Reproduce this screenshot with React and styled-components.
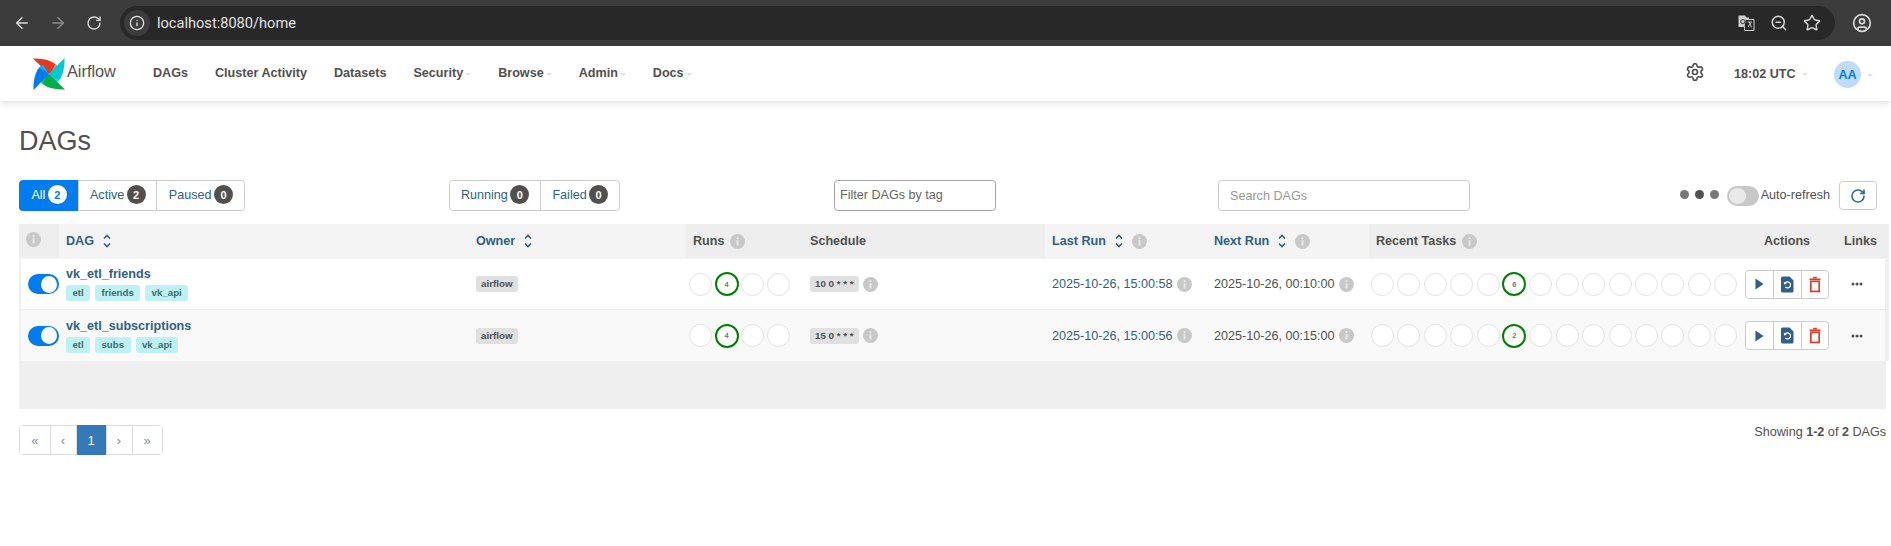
import React from 'react';
import styled, { createGlobalStyle } from 'styled-components';
import { ArrowLeft, ArrowRight, RotateCw, Info, ZoomOut, Star, CircleUser, Settings } from 'lucide-react';

const GlobalStyle = createGlobalStyle`
  html, body {
    margin: 0;
    padding: 0;
    background: #fff;
    font-family: "Liberation Sans", Arial, sans-serif;
    font-size: 12.6px;
    color: #51504f;
  }
  * {
    box-sizing: border-box;
  }
`;

const LINK = '#2f5f8a';

const BrowserBar = styled.div`
  height: 46px;
  background: #3c3c3c;
  display: flex;
  align-items: center;
  padding: 0 16px 0 4px;
`;

const BrowserButton = styled.div`
  width: 36px;
  height: 36px;
  flex: none;
  display: flex;
  align-items: center;
  justify-content: center;
  color: ${(p) => (p.$dim ? '#8a8a8a' : '#d8d8d8')};
`;

const UrlPill = styled.div`
  flex: 1;
  height: 34px;
  margin-left: 8px;
  background: #282828;
  border-radius: 17px;
  display: flex;
  align-items: center;
  padding: 0 14px 0 4px;
  color: #dcdcdc;
`;

const InfoChip = styled.div`
  width: 26px;
  height: 26px;
  border-radius: 50%;
  background: #3c3c3c;
  display: flex;
  align-items: center;
  justify-content: center;
  margin-right: 7px;
`;

const UrlText = styled.span`
  flex: 1;
  font-family: Roboto, "Liberation Sans", sans-serif;
  font-size: 14.6px;
  color: #e3e3e3;
`;

const UrlIcons = styled.div`
  display: flex;
  align-items: center;
  gap: 15px;
`;

const ProfileButton = styled.div`
  width: 26px;
  margin-left: 14px;
  display: flex;
  justify-content: center;
  color: #d8d8d8;
`;

const Navbar = styled.nav`
  height: 55px;
  background: #fff;
  display: flex;
  align-items: center;
  padding: 0 0 0 33px;
  box-shadow: 0 2px 7px rgba(0, 0, 0, 0.13);
  position: relative;
`;

const Brand = styled.div`
  display: flex;
  align-items: center;
  gap: 2px;
  width: 106.5px;
  font-size: 16.3px;
  color: #51504f;
  & > span {
    margin-top: -4px;
  }
`;

const NavItem = styled.a`
  display: flex;
  align-items: center;
  padding: 0 13.5px;
  font-weight: 700;
  font-size: 12.6px;
  color: #51504f;
  margin-top: -1px;
`;

const Caret = styled.span`
  width: 0;
  height: 0;
  margin-left: 2px;
  margin-top: 2px;
  border-left: 3px solid transparent;
  border-right: 3px solid transparent;
  border-top: 3px solid #e6dcea;
`;

const NavRight = styled.div`
  margin-left: auto;
  display: flex;
  align-items: center;
  padding-right: 18px;
`;

const GearIcon = styled(Settings)`
  margin-top: -3px;
`;

const Clock = styled.div`
  display: flex;
  align-items: center;
  font-weight: 700;
  margin: 0 0 0 29px;
  width: 100px;
`;

const Avatar = styled.div`
  width: 27px;
  height: 27px;
  border-radius: 50%;
  background: #bfdcf9;
  color: #017cee;
  font-weight: 700;
  display: flex;
  align-items: center;
  justify-content: center;
  margin-top: 2px;
`;

const Main = styled.main`
  padding: 25px 5px 0 19px;
`;

const Title = styled.h1`
  margin: 0 0 24px;
  font-size: 27px;
  line-height: 30px;
  font-weight: 400;
  color: #51504f;
`;

const Toolbar = styled.div`
  display: grid;
  grid-template-columns: 429.5px 385.5px 384px 252px 1fr;
  align-items: center;
  height: 31px;
  margin-bottom: 13px;
  padding-right: 9px;
`;

const ButtonGroup = styled.div`
  display: flex;
  height: 31px;
`;

const GroupButton = styled.a`
  display: flex;
  align-items: center;
  gap: 2.4px;
  padding: 0 10.8px 2px 11.4px;
  border: 1px solid #ccc;
  margin-left: -1px;
  background: ${(p) => (p.$active ? '#017cee' : '#fff')};
  border-color: ${(p) => (p.$active ? '#017cee' : '#ccc')};
  color: ${(p) => (p.$active ? '#fff' : LINK)};
  &:first-child {
    margin-left: 0;
    border-radius: 3.6px 0 0 3.6px;
  }
  &:last-child {
    border-radius: 0 3.6px 3.6px 0;
  }
`;

const Count = styled.span`
  min-width: 19px;
  height: 19px;
  border-radius: 10px;
  font-size: 11px;
  font-weight: 700;
  display: flex;
  align-items: center;
  justify-content: center;
  background: ${(p) => (p.$inverse ? '#fff' : '#51504f')};
  color: ${(p) => (p.$inverse ? '#017cee' : '#fff')};
`;

const TextInput = styled.input`
  height: 31px;
  width: ${(p) => p.$width}px;
  border: 1px solid ${(p) => (p.$strong ? '#a3a3a3' : '#ccc')};
  border-radius: 3.6px;
  padding: 0 0 ${(p) => (p.$strong ? 2 : 0)}px ${(p) => (p.$strong ? 5 : 11)}px;
  font-family: inherit;
  font-size: 12.6px;
  outline: none;
  &::placeholder {
    color: ${(p) => (p.$strong ? '#666' : '#999')};
    opacity: 1;
  }
`;

const RefreshArea = styled.div`
  display: flex;
  align-items: center;
  justify-content: flex-end;
`;

const Dot = styled.span`
  width: 9px;
  height: 9px;
  margin: -3px 3px 0 3px;
  border-radius: 50%;
  background: ${(p) => (p.$dark ? '#51504f' : '#777')};
`;

const AutoSwitch = styled.span`
  width: 32px;
  height: 20px;
  margin-left: 5px;
  border-radius: 10px;
  background: #c8c8c8;
  padding: 2px;
  display: flex;
`;

const AutoKnob = styled.span`
  width: 17px;
  height: 16px;
  border-radius: 50%;
  background: #e9e9e9;
`;

const AutoLabel = styled.span`
  margin: -1px 9px 0 2px;
`;

const RefreshButton = styled.a`
  width: 38px;
  height: 29px;
  border: 1px solid #ccc;
  border-radius: 3.6px;
  display: flex;
  align-items: center;
  justify-content: center;
  color: #2f6a9e;
`;

const TableWrap = styled.div`
  height: 185px;
  background: #efefef;
`;

const Table = styled.table`
  width: 1870px;
  table-layout: fixed;
  border-collapse: separate;
  border-spacing: 0;
`;

const Th = styled.th`
  height: 35px;
  padding: 0 0 0 ${(p) => p.$pad ?? 7}px;
  text-align: ${(p) => p.$align || 'left'};
  font-weight: 700;
  font-size: 12.6px;
  background: ${(p) => (p.$sortable ? '#f4f4f4' : '#eeeeee')};
  color: ${(p) => (p.$sortable ? LINK : '#51504f')};
  border-bottom: 1px solid #f4f4f4;
  white-space: nowrap;
`;

const HeadInner = styled.span`
  display: inline-flex;
  align-items: center;
  gap: ${(p) => p.$gap || 6}px;
`;

const Tr = styled.tr`
  background: ${(p) => (p.$odd ? '#f9f9f9' : '#fff')};
`;

const Td = styled.td`
  height: 51px;
  padding: 0 0 0 ${(p) => p.$pad ?? 7}px;
  border-bottom: ${(p) => (p.$last ? 'none' : '1px solid #eaeaea')};
  vertical-align: middle;
  text-align: ${(p) => p.$align || 'left'};
  &:first-child {
    border-left: 2px solid #efefef;
  }
  &:last-child {
    border-right: 4px solid #efefef;
  }
`;

const Switch = styled.span`
  width: 31px;
  height: 20px;
  margin-left: 7px;
  border-radius: 10px;
  background: #017cee;
  display: flex;
  align-items: center;
  justify-content: flex-end;
  padding-right: 2px;
`;

const SwitchKnob = styled.span`
  width: 16px;
  height: 17px;
  border-radius: 50%;
  background: #fff;
`;

const DagName = styled.a`
  display: block;
  font-weight: 700;
  line-height: 15px;
  color: ${LINK};
  margin-bottom: 3px;
`;

const Tags = styled.div`
  display: flex;
  gap: 5px;
`;

const Tag = styled.span`
  height: 16px;
  line-height: 16px;
  padding: 0 6.4px;
  border-radius: 3px;
  background: #bdf1f4;
  color: #3f6e6f;
  font-size: 9.7px;
  font-weight: 700;
`;

const Badge = styled.span`
  display: inline-block;
  height: 16px;
  line-height: 16px;
  padding: 0 5px;
  border-radius: 3px;
  background: #e0e0e0;
  color: #51504f;
  font-size: 9.8px;
  font-weight: 700;
  white-space: nowrap;
`;

const Circles = styled.div`
  display: flex;
  align-items: center;
  gap: ${(p) => p.$gap}px;
`;

const Circle = styled.span`
  width: 23px;
  height: 23px;
  flex: none;
  border-radius: 50%;
  background: #fff;
  border: ${(p) => (p.$on ? '2px solid #008000' : '1px solid #e2e2e2')};
  font-size: 7.5px;
  font-weight: 700;
  color: #777;
  display: flex;
  align-items: center;
  justify-content: center;
  ${(p) => (p.$on ? 'width: 24px; height: 24px; margin: 0 -0.5px;' : '')}
`;

const InlineInfo = styled.span`
  display: inline-flex;
  align-items: center;
  gap: ${(p) => p.$gap || 5}px;
  color: ${(p) => p.$color || 'inherit'};
`;

const ActionGroup = styled.div`
  display: inline-flex;
  height: 29px;
  border: 1px solid #ccc;
  border-radius: 3.6px;
  background: #fff;
  vertical-align: middle;
`;

const ActionButton = styled.span`
  width: 27.4px;
  display: flex;
  align-items: center;
  justify-content: center;
  & + & {
    border-left: 1px solid #ccc;
  }
`;

const LinksCell = styled.div`
  padding-left: 22px;
`;

const Footer = styled.div`
  display: flex;
  justify-content: space-between;
  align-items: flex-start;
  margin-top: 16px;
`;

const Pager = styled.div`
  display: flex;
  height: 30px;
  border: 1px solid #ddd;
  border-radius: 3.6px;
`;

const PageCell = styled.a`
  width: ${(p) => p.$width}px;
  display: flex;
  align-items: center;
  justify-content: center;
  color: ${(p) => (p.$active ? '#fff' : '#7d8d9d')};
  background: ${(p) => (p.$active ? '#337ab7' : '#fff')};
  font-size: 13px;
  margin: ${(p) => (p.$active ? '-1px 0' : '0')};
  & + & {
    border-left: 1px solid #ddd;
  }
`;

const Summary = styled.div`
  margin-top: -2px;
  line-height: 18px;
  font-size: 12.6px;
`;

const Logo = () => {
  const blades = [
    { angle: 0, dark: '#e43921', light: '#f4806a' },
    { angle: 90, dark: '#00c7d4', light: '#11e1ee' },
    { angle: 180, dark: '#00ad46', light: '#04d659' },
    { angle: 270, dark: '#017cee', light: '#0cb6ff' },
  ];
  return (
    <svg width="32" height="32" viewBox="0 0 32 32">
      {blades.map((b) => (
        <g key={b.angle} transform={`rotate(${b.angle} 16 16)`}>
          <path d="M0 0.5 L16 16 L25 10 C23 4 13 0 0 0.5Z" fill={b.dark} />
          <path d="M16 16 L25 10 C24.5 8.5 23.5 7 22 5.5 C21 10 19 13.5 16 16Z" fill={b.light} />
        </g>
      ))}
    </svg>
  );
};

const TranslateIcon = () => (
  <svg width="17" height="16" viewBox="0 0 17 16">
    <path d="M0.5 0.5H7L8.5 2.5H11V12H0.5Z" fill="#cfcfcf" />
    <circle cx="4.8" cy="6.6" r="2.1" fill="none" stroke="#555" strokeWidth="1.2" />
    <path d="M8 4.5H16V15.5H6.5V11.5" fill="#282828" stroke="#cfcfcf" strokeWidth="1" />
    <path d="M9.5 7H14M11.5 7L13.5 12.5M13 7.5L10 12" fill="none" stroke="#cfcfcf" strokeWidth="0.9" />
  </svg>
);

const InfoIcon = ({ size = 15 }) => (
  <svg width={size} height={size} viewBox="0 0 15 15" style={{ flex: 'none' }}>
    <circle cx="7.5" cy="7.5" r="7.5" fill="#c8c8c8" />
    <circle cx="7.5" cy="4.2" r="1.1" fill="#e8e8e8" />
    <rect x="6.5" y="6.2" width="2" height="5.4" fill="#e8e8e8" />
  </svg>
);

const SortIcon = () => (
  <svg width="10" height="16" viewBox="0 0 10 16" style={{ flex: 'none' }}>
    <path d="M2 5.5L5 2.5L8 5.5M2 10.5L5 13.5L8 10.5" fill="none" stroke="currentColor" strokeWidth="1.6" />
  </svg>
);

const PlayIcon = () => (
  <svg width="9" height="12" viewBox="0 0 10 13">
    <path d="M0.5 0.5L9.5 6.5L0.5 12.5Z" fill="#2f5f8a" />
  </svg>
);

const RepeatIcon = () => (
  <svg width="13" height="17" viewBox="0 0 13 17">
    <path d="M1.5 0.5H8.5L12.5 4.5V15a1.5 1.5 0 0 1-1.5 1.5H1.5A1.5 1.5 0 0 1 0 15V2A1.5 1.5 0 0 1 1.5 0.5Z" fill="#2f5f8a" />
    <path d="M4 7.2A3 3 0 1 1 4.4 11" fill="none" stroke="#fff" strokeWidth="1.2" />
    <path d="M2.8 5.8L3.1 8.6L5.8 7.8Z" fill="#fff" />
  </svg>
);

const TrashIcon = () => (
  <svg width="12" height="17" viewBox="0 0 13 17">
    <path d="M4.5 1H8.5M0.5 2.8H12.5" stroke="#e43921" strokeWidth="1.6" fill="none" />
    <rect x="2" y="5" width="9" height="11" fill="none" stroke="#e43921" strokeWidth="1.8" />
  </svg>
);

const DotsIcon = () => (
  <svg width="12" height="4" viewBox="0 0 12 4" style={{ display: 'block' }}>
    <circle cx="2" cy="2" r="1.5" fill="#51504f" />
    <circle cx="6" cy="2" r="1.5" fill="#51504f" />
    <circle cx="10" cy="2" r="1.5" fill="#51504f" />
  </svg>
);

const rows = [
  { name: 'vk_etl_friends', tags: ['etl', 'friends', 'vk_api'], schedule: '10 0 * * *', last: '2025-10-26, 15:00:58', next: '2025-10-26, 00:10:00', tasks: 6 },
  { name: 'vk_etl_subscriptions', tags: ['etl', 'subs', 'vk_api'], schedule: '15 0 * * *', last: '2025-10-26, 15:00:56', next: '2025-10-26, 00:15:00', tasks: 2 },
];

const navItems = [
  { label: 'DAGs' },
  { label: 'Cluster Activity' },
  { label: 'Datasets' },
  { label: 'Security', menu: true },
  { label: 'Browse', menu: true },
  { label: 'Admin', menu: true },
  { label: 'Docs', menu: true },
];

const App = () => (
  <>
    <GlobalStyle />
    <BrowserBar>
      <BrowserButton><ArrowLeft size={18} /></BrowserButton>
      <BrowserButton $dim><ArrowRight size={18} /></BrowserButton>
      <BrowserButton><RotateCw size={16} /></BrowserButton>
      <UrlPill>
        <InfoChip><Info size={16} color="#e0e0e0" /></InfoChip>
        <UrlText>localhost:8080/home</UrlText>
        <UrlIcons>
          <TranslateIcon />
          <ZoomOut size={18} color="#d8d8d8" />
          <Star size={18} color="#d8d8d8" />
        </UrlIcons>
      </UrlPill>
      <ProfileButton><CircleUser size={20} /></ProfileButton>
    </BrowserBar>

    <Navbar>
      <Brand>
        <Logo />
        <span>Airflow</span>
      </Brand>
      {navItems.map((item) => (
        <NavItem key={item.label}>
          {item.label}
          {item.menu && <Caret />}
        </NavItem>
      ))}
      <NavRight>
        <GearIcon size={20} color="#51504f" />
        <Clock>18:02 UTC<Caret style={{ marginLeft: 6 }} /></Clock>
        <Avatar>AA</Avatar>
        <Caret style={{ marginLeft: 6, marginTop: 3 }} />
      </NavRight>
    </Navbar>

    <Main>
      <Title>DAGs</Title>
      <Toolbar>
        <ButtonGroup>
          <GroupButton $active>All <Count $inverse>2</Count></GroupButton>
          <GroupButton>Active <Count>2</Count></GroupButton>
          <GroupButton>Paused <Count>0</Count></GroupButton>
        </ButtonGroup>
        <ButtonGroup>
          <GroupButton>Running <Count>0</Count></GroupButton>
          <GroupButton>Failed <Count>0</Count></GroupButton>
        </ButtonGroup>
        <TextInput $strong $width={162} placeholder="Filter DAGs by tag" />
        <TextInput $width={252} placeholder="Search DAGs" />
        <RefreshArea>
          <Dot />
          <Dot $dark />
          <Dot />
          <AutoSwitch><AutoKnob /></AutoSwitch>
          <AutoLabel>Auto-refresh</AutoLabel>
          <RefreshButton><RotateCw size={16} strokeWidth={2.4} /></RefreshButton>
        </RefreshArea>
      </Toolbar>

      <TableWrap>
        <Table>
          <colgroup>
            <col style={{ width: 40 }} />
            <col style={{ width: 410 }} />
            <col style={{ width: 217 }} />
            <col style={{ width: 117 }} />
            <col style={{ width: 242 }} />
            <col style={{ width: 162 }} />
            <col style={{ width: 162 }} />
            <col style={{ width: 376 }} />
            <col style={{ width: 84 }} />
            <col style={{ width: 60 }} />
          </colgroup>
          <thead>
            <tr>
              <Th><InfoIcon /></Th>
              <Th $sortable><HeadInner $gap={8}>DAG <SortIcon /></HeadInner></Th>
              <Th $sortable><HeadInner $gap={8}>Owner <SortIcon /></HeadInner></Th>
              <Th><HeadInner>Runs <InfoIcon /></HeadInner></Th>
              <Th>Schedule</Th>
              <Th $sortable><HeadInner $gap={8}>Last Run <SortIcon /> <InfoIcon /></HeadInner></Th>
              <Th $sortable><HeadInner $gap={8}>Next Run <SortIcon /> <InfoIcon /></HeadInner></Th>
              <Th><HeadInner>Recent Tasks <InfoIcon /></HeadInner></Th>
              <Th $align="center" $pad={0}>Actions</Th>
              <Th $pad={15}>Links</Th>
            </tr>
          </thead>
          <tbody>
            {rows.map((row, i) => {
              const last = i === rows.length - 1;
              return (
                <Tr key={row.name} $odd={i % 2 === 1}>
                  <Td $pad={0} $last={last}><Switch><SwitchKnob /></Switch></Td>
                  <Td $last={last}>
                    <DagName>{row.name}</DagName>
                    <Tags>{row.tags.map((t) => <Tag key={t}>{t}</Tag>)}</Tags>
                  </Td>
                  <Td $last={last}><Badge>airflow</Badge></Td>
                  <Td $pad={3} $last={last}>
                    <Circles $gap={3}>
                      {[0, 1, 2, 3].map((n) => (
                        <Circle key={n} $on={n === 1}>{n === 1 ? 4 : ''}</Circle>
                      ))}
                    </Circles>
                  </Td>
                  <Td $last={last}>
                    <InlineInfo $gap={4}><Badge>{row.schedule}</Badge><InfoIcon /></InlineInfo>
                  </Td>
                  <Td $last={last}>
                    <InlineInfo $color={LINK}>{row.last} <InfoIcon /></InlineInfo>
                  </Td>
                  <Td $last={last}>
                    <InlineInfo>{row.next} <InfoIcon /></InlineInfo>
                  </Td>
                  <Td $pad={2} $last={last}>
                    <Circles $gap={3.4}>
                      {Array.from({ length: 14 }, (_, n) => (
                        <Circle key={n} $on={n === 5}>{n === 5 ? row.tasks : ''}</Circle>
                      ))}
                    </Circles>
                  </Td>
                  <Td $pad={0} $align="center" $last={last}>
                    <ActionGroup>
                      <ActionButton><PlayIcon /></ActionButton>
                      <ActionButton><RepeatIcon /></ActionButton>
                      <ActionButton><TrashIcon /></ActionButton>
                    </ActionGroup>
                  </Td>
                  <Td $pad={0} $last={last}><LinksCell><DotsIcon /></LinksCell></Td>
                </Tr>
              );
            })}
          </tbody>
        </Table>
      </TableWrap>

      <Footer>
        <Pager>
          <PageCell $width={29.5}>«</PageCell>
          <PageCell $width={26}>‹</PageCell>
          <PageCell $width={30} $active>1</PageCell>
          <PageCell $width={26}>›</PageCell>
          <PageCell $width={30}>»</PageCell>
        </Pager>
        <Summary>Showing <b>1-2</b> of <b>2</b> DAGs</Summary>
      </Footer>
    </Main>
  </>
);

export default App;
